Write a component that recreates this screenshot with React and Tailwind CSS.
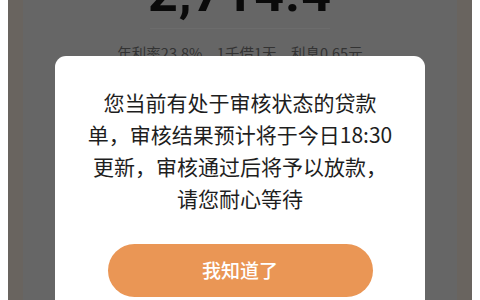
export default function App() {
  const cjk = { fontFamily: '"Noto Sans CJK SC", "Noto Sans", sans-serif' };
  return (
    <div className="w-[480px] h-[300px] bg-white overflow-hidden" style={cjk}>
      <div className="relative mx-2 h-[300px] bg-[#666666] overflow-hidden flex">
        <div className="w-[15px] bg-[#69645f]" />
        <div className="flex-1 flex flex-col items-center">
          <div
            className="-mt-[32px] text-[52px] leading-none font-bold text-[#0a0a0a] tracking-[1px]"
            style={{ fontFamily: 'Roboto, "Liberation Sans", sans-serif' }}
          >
            2,714.4
          </div>
          <div className="mt-[8px] w-[180px] h-px bg-[#6c6c6c]" />
          <div className="mt-[15px] text-[14.5px] leading-[17px] text-[#333333]">
            年利率23.8%，1千借1天，利息0.65元
          </div>
        </div>
        <div className="w-[15px] bg-[#69645f]" />

        <div className="absolute left-[47px] top-[56px] w-[370px] h-[270px] bg-white rounded-[11px] flex flex-col items-center pt-[30px]">
          <div className="text-[21px] leading-[32px] text-[#1e1e1e] text-center">
            <div>您当前有处于审核状态的贷款</div>
            <div>单，审核结果预计将于今日18:30</div>
            <div>更新，审核通过后将予以放款，</div>
            <div>请您耐心等待</div>
          </div>
          <button className="mt-[30px] w-[265px] h-[53px] rounded-full bg-[#ea9655] text-white text-[19px] font-medium">
            我知道了
          </button>
        </div>
      </div>
    </div>
  );
}
